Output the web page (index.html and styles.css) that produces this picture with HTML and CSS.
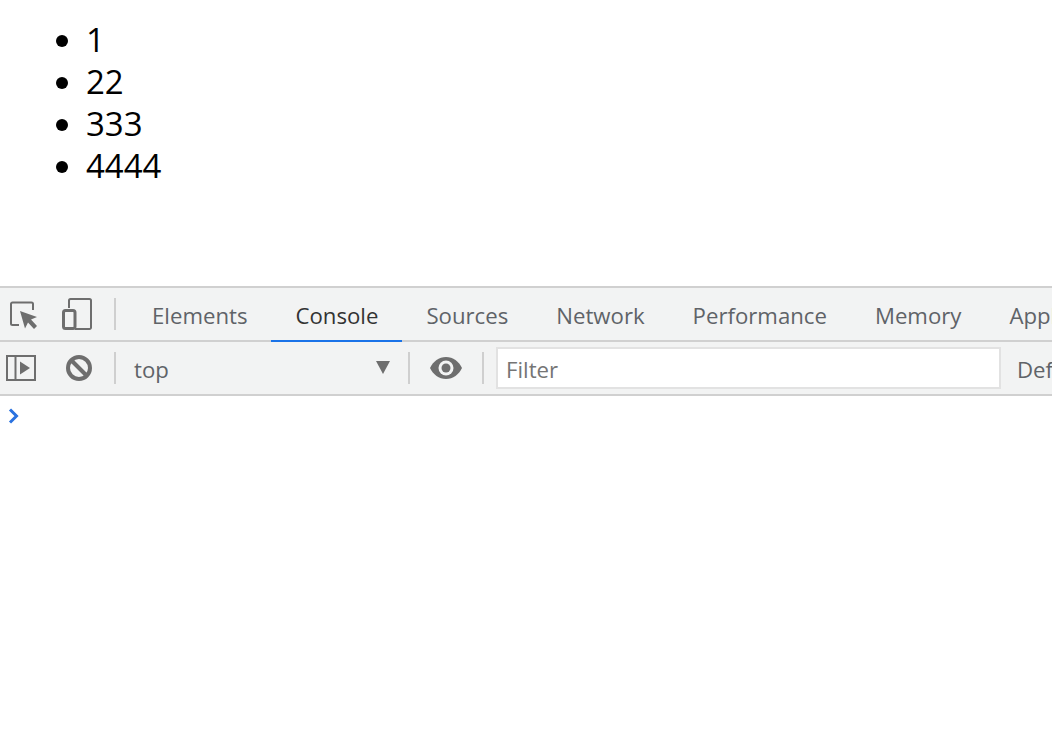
FILE: index.html
```html
<!DOCTYPE html>
<html lang="en">
<head>
  <meta charset="UTF-8">
  <title>List</title>
  <link rel="stylesheet" href="styles.css">
</head>
<body>
  <div class="page">
    <ul class="list">
      <li>1</li>
      <li>22</li>
      <li>333</li>
      <li>4444</li>
    </ul>
  </div>
  <div class="devtools">
    <div class="bar tabs-bar">
      <svg class="icon inspect" width="28" height="28" viewBox="0 0 28 28">
        <path d="M9 24H2.500A1.500 1.500 0 0 1 1 22.500V3a1.500 1.500 0 0 1 1.500-1.500h19A1.500 1.500 0 0 1 23 3v6" fill="none" stroke="#6e6e6e" stroke-width="2"/>
        <path d="M10 10l17 6-6 2.500 6 6.500-3 3-6-6.500-3 6z" fill="#6e6e6e"/>
      </svg>
      <svg class="icon device" width="30" height="32" viewBox="0 0 30 32">
        <path d="M7 10V2.500A1.500 1.500 0 0 1 8.500 1h19A1.500 1.500 0 0 1 29 2.500v27a1.500 1.500 0 0 1-1.500 1.500H13" fill="none" stroke="#6e6e6e" stroke-width="2"/>
        <rect x="1.500" y="12.500" width="11.500" height="18" rx="2" fill="none" stroke="#6e6e6e" stroke-width="3"/>
      </svg>
      <span class="sep sep-tabs"></span>
      <div class="tabs">
        <span class="tab">Elements</span>
        <span class="tab active">Console</span>
        <span class="tab">Sources</span>
        <span class="tab">Network</span>
        <span class="tab">Performance</span>
        <span class="tab">Memory</span>
        <span class="tab">Application</span>
      </div>
    </div>
    <div class="bar console-bar">
      <svg class="icon sidebar" width="30" height="26" viewBox="0 0 30 26">
        <rect x="1" y="1" width="28" height="24" fill="none" stroke="#6e6e6e" stroke-width="2"/>
        <path d="M9.500 1v24" stroke="#6e6e6e" stroke-width="2"/>
        <path d="M14 6.500l10 6.500-10 6.500z" fill="#6e6e6e"/>
      </svg>
      <svg class="icon clear" width="26" height="26" viewBox="0 0 26 26">
        <circle cx="13" cy="13" r="11" fill="none" stroke="#6e6e6e" stroke-width="4"/>
        <path d="M5.500 5.500l15 15" stroke="#6e6e6e" stroke-width="4"/>
      </svg>
      <span class="sep sep-clear"></span>
      <div class="context">
        <span>top</span>
        <svg width="14" height="13" viewBox="0 0 14 13"><path d="M0 0h14L7 13z" fill="#6e6e6e"/></svg>
      </div>
      <span class="sep sep-context"></span>
      <svg class="icon eye" width="32" height="22" viewBox="0 0 32 22">
        <path d="M16 0C9 0 3 4.500 0 11c3 6.500 9 11 16 11s13-4.500 16-11C29 4.500 23 0 16 0z" fill="#6e6e6e"/>
        <circle cx="16" cy="11" r="7.500" fill="#f2f3f3"/>
        <circle cx="16" cy="11" r="4.500" fill="#6e6e6e"/>
      </svg>
      <span class="sep sep-eye"></span>
      <div class="filter">Filter</div>
      <span class="levels">Default levels</span>
    </div>
    <div class="prompt">
      <svg width="11" height="16" viewBox="0 0 11 16"><path d="M2 1.500L8.500 8 2 14.500" fill="none" stroke="#2a72e0" stroke-width="3"/></svg>
    </div>
  </div>
</body>
</html>
```

FILE: styles.css
```css
html, body {
  margin: 0;
  padding: 0;
  background: #fff;
  overflow: hidden;
}
body {
  width: 1052px;
  height: 746px;
  font-family: "Open Sans", "Noto Sans", sans-serif;
}
.page {
  height: 286px;
}
.list {
  margin: 0;
  padding: 19px 0 0 86px;
  font-size: 33px;
  line-height: 42px;
  color: #000;
}
.devtools {
  border-top: 2px solid #d0d0d0;
}
.bar {
  display: flex;
  align-items: center;
  box-sizing: border-box;
  height: 54px;
  padding-bottom: 2px;
  background: #f2f3f3;
  box-shadow: inset 0 -2px #d0d0d0;
  white-space: nowrap;
  overflow: hidden;
  color: #5f6368;
  font-size: 22.2px;
}
.icon {
  flex: none;
}
.inspect {
  margin-left: 10px;
  margin-top: 2px;
}
.device {
  margin-left: 24px;
}
.sep {
  flex: none;
  width: 2px;
  height: 32px;
  background: #cfcfcf;
}
.sep-tabs {
  margin-left: 22px;
}
.tabs {
  display: flex;
  align-self: stretch;
  margin-left: 12px;
}
.tab {
  display: flex;
  align-items: center;
  flex: none;
  padding: 2px 24px 0;
  margin-bottom: -2px;
  border-bottom: 2px solid transparent;
}
.tab.active {
  color: #333;
  border-bottom-color: #1a73e8;
}
.sidebar {
  margin-left: 6px;
}
.clear {
  margin-left: 30px;
}
.sep-clear {
  margin-left: 22px;
}
.context {
  display: flex;
  flex: none;
  align-items: center;
  justify-content: space-between;
  box-sizing: border-box;
  width: 256px;
  margin-left: 18px;
  padding-top: 2px;
}
.context svg {
  margin-top: -4px;
}
.sep-context {
  margin-left: 18px;
}
.eye {
  margin-left: 20px;
}
.sep-eye {
  margin-left: 20px;
}
.filter {
  flex: none;
  box-sizing: border-box;
  width: 505px;
  height: 42px;
  margin-left: 12px;
  padding-left: 8px;
  line-height: 42px;
  background: #fff;
  border: 2px solid #e2e2e2;
  color: #757575;
}
.levels {
  margin-left: 16px;
  padding-top: 2px;
}
.prompt {
  display: flex;
  padding: 12px 0 0 8px;
}
```
